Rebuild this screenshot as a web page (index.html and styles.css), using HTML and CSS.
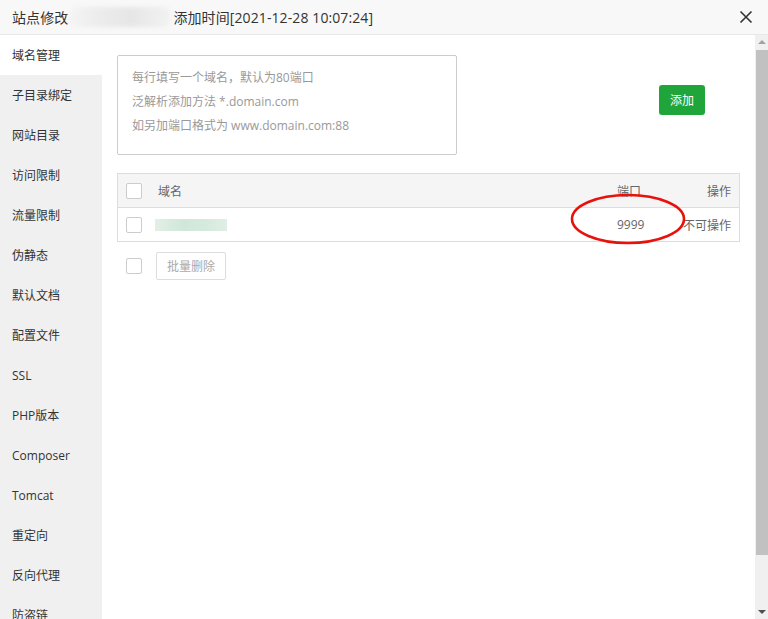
FILE: index.html
```html
<!DOCTYPE html>
<html>
<head>
<meta charset="utf-8">
<link rel="stylesheet" href="styles.css">
</head>
<body>
<div class="dialog">
  <div class="titlebar">
    <span class="title">站点修改<span class="blur"></span>添加时间[2021-12-28 10:07:24]</span>
    <svg class="close" width="14" height="14" viewBox="0 0 14 14"><path d="M1.5 1.5L12.5 12.5M12.5 1.5L1.5 12.5" stroke="#333" stroke-width="1.6" fill="none"/></svg>
  </div>
  <div class="body">
    <div class="sidebar">
      <div class="item active">域名管理</div>
      <div class="item">子目录绑定</div>
      <div class="item">网站目录</div>
      <div class="item">访问限制</div>
      <div class="item">流量限制</div>
      <div class="item">伪静态</div>
      <div class="item">默认文档</div>
      <div class="item">配置文件</div>
      <div class="item">SSL</div>
      <div class="item">PHP版本</div>
      <div class="item">Composer</div>
      <div class="item">Tomcat</div>
      <div class="item">重定向</div>
      <div class="item">反向代理</div>
      <div class="item">防盗链</div>
    </div>
    <div class="content">
      <div class="top">
        <div class="textarea">
          <div class="line">每行填写一个域名，默认为80端口</div>
          <div class="line">泛解析添加方法 *.domain.com</div>
          <div class="line">如另加端口格式为 www.domain.com:88</div>
        </div>
        <button class="btn-add">添加</button>
      </div>
      <div class="table">
        <div class="row head">
          <span class="cb"></span>
          <span class="c-name">域名</span>
          <span class="c-port">端口</span>
          <span class="c-op">操作</span>
        </div>
        <div class="row">
          <span class="cb"></span>
          <span class="c-name"><span class="blur-domain"></span></span>
          <span class="c-port">9999</span>
          <span class="c-op">不可操作</span>
        </div>
        <svg class="mark" width="124" height="56" viewBox="0 0 124 56"><ellipse cx="62" cy="28" rx="56" ry="24" fill="none" stroke="#e8120c" stroke-width="2.6"/></svg>
      </div>
      <div class="bottom">
        <span class="cb"></span>
        <button class="btn-del">批量删除</button>
      </div>
    </div>
    <div class="scrollbar">
      <div class="arrow up"></div>
      <div class="thumb"></div>
      <div class="arrow down"></div>
    </div>
  </div>
</div>
</body>
</html>
```
FILE: styles.css
```css
html, body { margin: 0; padding: 0; }
body {
  width: 768px; height: 619px; overflow: hidden;
  font-family: "Open Sans", "Noto Sans CJK SC", sans-serif;
  color: #333; background: #fff;
}
.dialog { display: flex; flex-direction: column; height: 619px; }
.titlebar {
  height: 34px; flex: none; background: #f8f8f8;
  border-bottom: 1px solid #e8e8e8;
  display: flex; align-items: center; justify-content: space-between;
  padding: 0 15px 0 12px; box-sizing: content-box;
}
.title { font-size: 14px; color: #333; display: flex; align-items: center; letter-spacing: 0.1px; }
.blur {
  display: inline-block; width: 102px; height: 20px;
  background: linear-gradient(90deg, #f4f4f4, #ececec 30%, #e6e6e6 60%, #f2f2f2);
  border-radius: 8px; filter: blur(2px); margin: 0 2px 0 1px;
}
.close { display: block; }
.body { flex: 1; display: flex; min-height: 0; }
.sidebar { width: 102px; flex: none; background: #f0f0f0; overflow: hidden; }
.item {
  height: 40px; line-height: 41px; padding-left: 12px;
  font-size: 12px; color: #333; white-space: nowrap;
}
.item.active { background: #fff; }
.content { flex: 1; padding: 20px 15px 0 15px; }
.top { display: flex; align-items: center; }
.textarea {
  width: 340px; height: 100px; box-sizing: border-box;
  border: 1px solid #ccc; border-radius: 2px;
  padding: 10px 14px; font-size: 12px; color: #999;
}
.textarea .line { height: 24px; line-height: 24px; }
.btn-add {
  margin-left: 202px; width: 46px; height: 30px; margin-bottom: 10px;
  background: #20a53a; color: #fff; border: none; border-radius: 3px;
  font-family: inherit; font-size: 12px; padding: 0;
}
.table {
  position: relative; margin-top: 18px;
  border: 1px solid #ddd; width: 621px;
}
.row {
  height: 33px; display: flex; align-items: center;
  padding: 0 8px; font-size: 12px; color: #666;
}
.row.head { background: #f5f5f5; border-bottom: 1px solid #ddd; color: #666; }
.cb {
  width: 16px; height: 16px; box-sizing: border-box; flex: none;
  border: 1px solid #ccc; border-radius: 2px; background: #fff;
}
.c-name { margin-left: 16px; flex: 1; display: flex; align-items: center; }
.c-port { width: 66px; text-align: left; }
.c-op { width: 48px; text-align: right; white-space: nowrap; }
.blur-domain {
  display: inline-block; width: 72px; height: 12px; margin-left: -3px;
  background: linear-gradient(90deg, #e3efe6, #cfe7d9 40%, #d5eadc 70%, #e0eee4);
}
.mark { position: absolute; left: 448px; top: 17px; }
.bottom { display: flex; align-items: center; margin-top: 10px; padding-left: 9px; }
.btn-del {
  margin-left: 14px; height: 28px; width: 70px; box-sizing: border-box;
  border: 1px solid #ddd; border-radius: 2px; background: #fff;
  color: #aaa; font-family: inherit; font-size: 12px; padding: 0;
}
.scrollbar {
  width: 13px; flex: none; background: #f0f0f0;
  display: flex; flex-direction: column; align-items: center;
}
.thumb { width: 12px; margin-left: 1px; height: 505px; background: #c1c1c1; }
.arrow { width: 0; height: 0; border-left: 4px solid transparent; border-right: 4px solid transparent; }
.arrow.up { border-bottom: 4px solid #a3a3a3; margin: 5px 0 6px; }
.arrow.down { border-top: 4px solid #505050; margin-top: auto; margin-bottom: 5px; }
```
